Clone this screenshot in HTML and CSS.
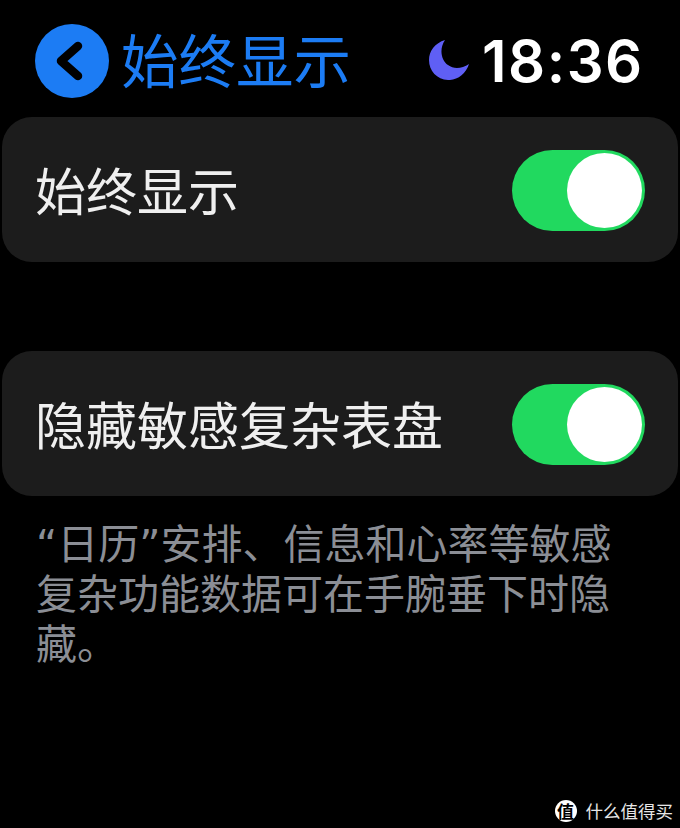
FILE: index.html
```html
<!DOCTYPE html>
<html lang="zh-CN">
<head>
  <meta charset="utf-8">
  <title>始终显示</title>
  <link rel="stylesheet" href="styles.css">
</head>
<body>

  <header class="topbar">
    <div class="back">
      <svg viewBox="0 0 74 74" width="74" height="74">
        <circle cx="37" cy="37" r="37" fill="#1c7cf4"/>
        <path d="M43 22 L26 37 L43 52" fill="none" stroke="#000" stroke-width="8.5" stroke-linecap="round" stroke-linejoin="round"/>
      </svg>
    </div>
    <h1 class="title">始终显示</h1>
    <svg class="moon" viewBox="0 0 40 40" width="40" height="40">
      <path d="M16 0 C10 9 12 20 19 25 C25 29.5 33 28.5 40 24 C37 34 28 40.5 19 40 C8 39.5 0 31 0 20 C0 11 6 3 16 0 Z" fill="#5f5ff5"/>
    </svg>
    <div class="time">18:36</div>
  </header>

  <section class="card">
    <span class="label">始终显示</span>
    <div class="switch"><div class="knob"></div></div>
  </section>

  <section class="card second">
    <span class="label">隐藏敏感复杂表盘</span>
    <div class="switch"><div class="knob"></div></div>
  </section>

  <p class="note">“日历”安排、信息和心率等敏感复杂功能数据可在手腕垂下时隐藏。</p>

  <div class="watermark">
    <span class="badge">值</span>
    <span>什么值得买</span>
  </div>

</body>
</html>
```

FILE: styles.css
```css
* {
  box-sizing: border-box;
}

html, body {
  margin: 0;
  padding: 0;
  height: 100%;
}

body {
  position: relative;
  background: #000;
  overflow: hidden;
  font-family: 'Noto Sans CJK SC', sans-serif;
  padding: 24px 2px 0;
}

.topbar {
  display: flex;
  align-items: center;
  height: 74px;
  padding-left: 33px;
  margin-bottom: 19px;
}

.back {
  width: 74px;
  height: 74px;
  margin-right: 12px;
}

.back svg {
  display: block;
}

.title {
  margin: 0 0 6px;
  font-size: 57.5px;
  font-weight: 400;
  line-height: 68px;
  white-space: nowrap;
  color: #1c7cf4;
}

.moon {
  margin-left: 78px;
  margin-top: -2px;
}

.time {
  margin-left: 13px;
  font-family: Inter, sans-serif;
  font-size: 58px;
  font-weight: 600;
  letter-spacing: 1.5px;
  line-height: 74px;
  color: #fff;
}

.card {
  display: flex;
  align-items: center;
  justify-content: space-between;
  height: 145px;
  padding: 0 33px;
  background: #1c1c1c;
  border-radius: 30px;
}

.card.second {
  margin-top: 89px;
}

.label {
  font-size: 51px;
  font-weight: 400;
  line-height: 1;
  color: #efefef;
}

.switch {
  display: flex;
  align-items: center;
  justify-content: flex-end;
  width: 133px;
  height: 81px;
  margin-top: 2px;
  padding-right: 3px;
  background: #21d95f;
  border-radius: 41px;
}

.knob {
  width: 75px;
  height: 75px;
  background: #fff;
  border-radius: 50%;
}

.note {
  margin: 24px 0 0;
  padding: 0 60px 0 34px;
  font-family: 'DejaVu Sans', 'Noto Sans CJK SC', sans-serif;
  font-size: 41px;
  font-weight: 400;
  line-height: 50px;
  color: #8b8e95;
}

.watermark {
  position: absolute;
  right: 7px;
  bottom: 6px;
  display: flex;
  align-items: center;
  gap: 9px;
  font-size: 17.5px;
  line-height: 22px;
  color: #e6e6e6;
}

.badge {
  display: flex;
  align-items: center;
  justify-content: center;
  width: 22px;
  height: 22px;
  font-family: 'Noto Sans CJK SC', sans-serif;
  font-size: 17px;
  font-weight: 700;
  color: #000;
  background: #fff;
  border-radius: 50%;
}
```
